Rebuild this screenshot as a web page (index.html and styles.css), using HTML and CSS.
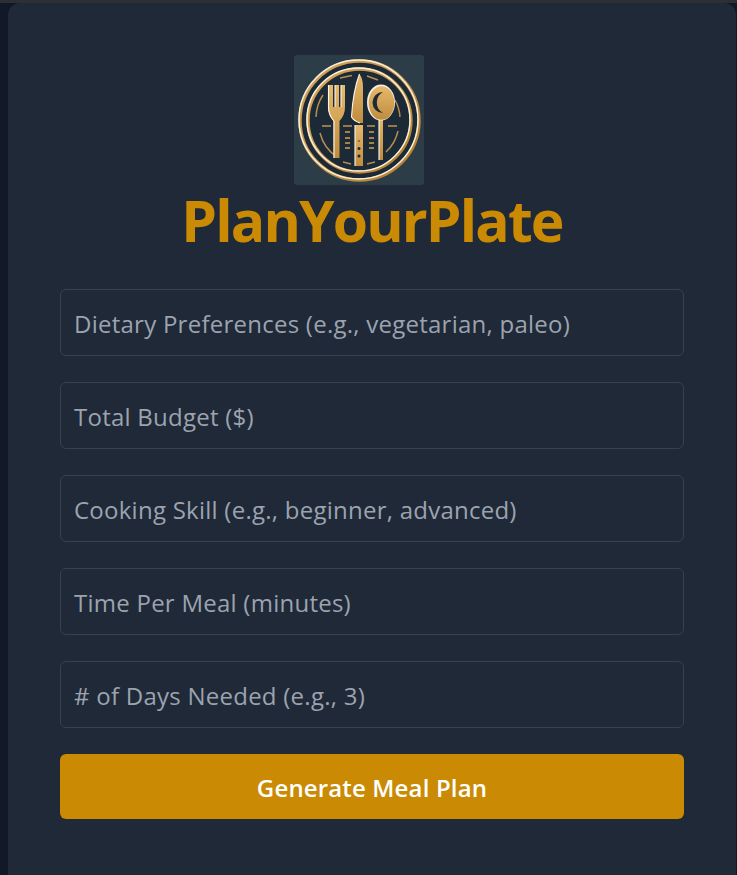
FILE: index.html
```html
<!DOCTYPE html>
<html lang="en">
<head>
<meta charset="utf-8">
<title>PlanYourPlate</title>
<link rel="stylesheet" href="styles.css">
</head>
<body>
<div class="topbar"></div>
<main class="card">
  <svg class="logo" viewBox="0 0 130 130" role="img" aria-label="PlanYourPlate logo">
    <defs>
      <linearGradient id="gold" x1="0" y1="0" x2="0" y2="1">
        <stop offset="0" stop-color="#e6b96e"/>
        <stop offset="1" stop-color="#c08c3c"/>
      </linearGradient>
      <linearGradient id="ring" x1="0" y1="0" x2="1" y2="1">
        <stop offset="0" stop-color="#d6a65a"/>
        <stop offset="1" stop-color="#b57f2c"/>
      </linearGradient>
    </defs>
    <rect class="logo-bg" width="130" height="130" rx="3"/>
    <circle class="disc" cx="65" cy="65" r="61"/>
    <circle class="ring-gold" cx="65.500" cy="65.500" r="59.500"/>
    <circle class="ring-white" cx="64.500" cy="64.500" r="59.500"/>
    <circle class="ring-gold" cx="65.500" cy="65.500" r="51.500"/>
    <circle class="ring-white" cx="64.500" cy="64.500" r="51.500"/>
    <path class="dash" d="M29 40A43 43 0 0 0 22 62M26 78A41 41 0 0 0 43 102M101 45A41 41 0 0 1 106 62M104 76A41 41 0 0 1 92 97M46 23L58 20.500M73 21L84 25M49 107L57 109M73 109L81 107"/>
    <path class="tick" d="M28 71H37M49 71H58M73 71H81M94 71H103"/>
    <path class="tick small" d="M51 77H56M51 83H56M51 88H56M51 93H56M75 77H80M75 83H80M75 88H80M75 93H80"/>
    <path class="fork" d="M34 30H39V52H41V30H45V52H47V30H51V52Q51 60 45.500 66V103H39.500V66Q34 60 34 52Z"/>
    <path class="white-edge" d="M34.500 30V52Q34.500 60 40 66V103M41 30V52M47 30V52"/>
    <path class="knife" d="M65.500 19Q69 24 69 32V68H66Q60 66 57.500 62Q59 36 65.500 19Z"/>
    <path class="knife" d="M61 70H69V111H61Z"/>
    <path class="white-edge" d="M65.500 19Q59 36 57.500 62Q60 66 66 68M61 70V111"/>
    <circle class="hole" cx="65" cy="86" r="0.800"/>
    <circle class="hole" cx="65" cy="93.500" r="1.500"/>
    <circle class="hole" cx="65" cy="101" r="1.500"/>
    <path class="fork" d="M85 60H89V105H85Z"/>
    <path class="white-edge" d="M85 62V105"/>
    <ellipse class="spoon-edge" cx="87" cy="47.500" rx="14" ry="18"/>
    <ellipse class="fork" cx="87.500" cy="48" rx="12.800" ry="16.800"/>
    <path class="crescent" d="M89 37A10.500 10.500 0 1 0 89 58A12 12 0 0 1 89 37Z"/>
  </svg>
  <h1 class="title">PlanYourPlate</h1>
  <form class="form">
    <input class="field" type="text" placeholder="Dietary Preferences (e.g., vegetarian, paleo)">
    <input class="field" type="text" placeholder="Total Budget ($)">
    <input class="field" type="text" placeholder="Cooking Skill (e.g., beginner, advanced)">
    <input class="field" type="text" placeholder="Time Per Meal (minutes)">
    <input class="field" type="text" placeholder="# of Days Needed (e.g., 3)">
    <button class="submit" type="button">Generate Meal Plan</button>
  </form>
</main>
</body>
</html>
```

FILE: styles.css
```css
* { box-sizing: border-box; }
html, body { height: 100%; }
body {
  margin: 0;
  background: #111827;
  overflow: hidden;
  font-family: "Open Sans", "Noto Sans", sans-serif;
}
.topbar { height: 3px; background: #2e2f31; }
.card {
  margin: 0 1px 0 8px;
  height: 900px;
  padding: 52px 52px 0;
  background: #1f2937;
  border-radius: 12px 12px 0 0;
  display: flex;
  flex-direction: column;
  align-items: center;
}
.logo { width: 130px; height: 130px; display: block; flex: none; margin-right: 26px; }
.logo-bg { fill: #2d3d47; }
.disc { fill: #1c2a38; }
.ring-gold, .ring-white { fill: none; }
.ring-gold { stroke: url(#ring); stroke-width: 3.400; }
.ring-white { stroke: #f6f0e2; stroke-width: 1.500; }
.dash { fill: none; stroke: #b58c4e; stroke-width: 1.500; }
.tick { fill: none; stroke: #c0934e; stroke-width: 1.700; }
.tick.small { stroke-width: 2; stroke: #a98248; }
.fork, .knife { fill: url(#gold); }
.white-edge { fill: none; stroke: #fbf7ee; stroke-width: 1.100; }
.spoon-edge { fill: #f6f0e2; }
.crescent { fill: #1c2a38; }
.hole { fill: #1c2a38; }
.title {
  margin: 0;
  height: 74px;
  font-size: 57px;
  line-height: 70px;
  font-weight: 700;
  letter-spacing: -1.850px;
  color: #ca8a04;
  white-space: nowrap;
}
.form {
  align-self: stretch;
  margin-top: 30px;
  display: flex;
  flex-direction: column;
  gap: 26px;
}
.field {
  display: block;
  width: 100%;
  height: 67px;
  padding: 2px 13px 0;
  background: #1f2937;
  border: 1px solid #374151;
  border-radius: 6px;
  font: 400 24px/32px "Open Sans", "Noto Sans", sans-serif;
  letter-spacing: 0.250px;
  color: #e5e7eb;
  outline: none;
}
.field::placeholder { color: #9ca3af; opacity: 1; }
.submit {
  display: block;
  width: 100%;
  height: 65px;
  padding: 2px 0 0;
  border: 0;
  border-radius: 6px;
  background: #ca8a04;
  color: #fff;
  font: 600 24px/32px "Open Sans", "Noto Sans", sans-serif;
  letter-spacing: 0.150px;
}
```
